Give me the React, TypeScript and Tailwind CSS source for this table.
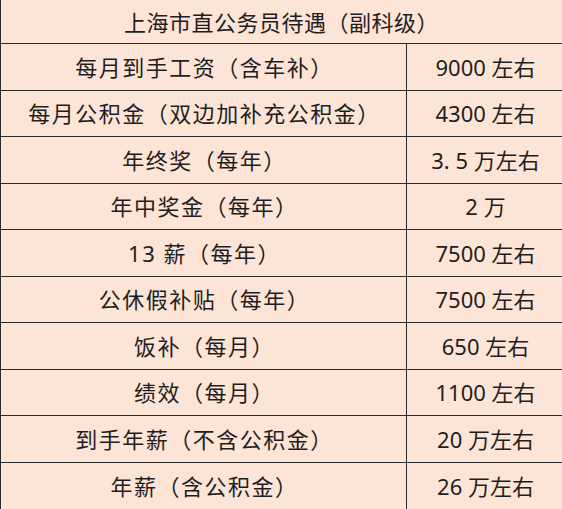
const rows: [string, string][] = [
  ['每月到手工资（含车补）', '9000 左右'],
  ['每月公积金（双边加补充公积金）', '4300 左右'],
  ['年终奖（每年）', '3. 5 万左右'],
  ['年中奖金（每年）', '2 万'],
  ['13 薪（每年）', '7500 左右'],
  ['公休假补贴（每年）', '7500 左右'],
  ['饭补（每月）', '650 左右'],
  ['绩效（每月）', '1100 左右'],
  ['到手年薪（不含公积金）', '20 万左右'],
  ['年薪（含公积金）', '26 万左右'],
];

export default function App() {
  return (
    <div
      className="w-[562px] h-[509px] overflow-hidden bg-[#fce4d6] text-[#1e1e1e] border-l-[1.5px] border-[#2a2a2a] text-[22px] leading-none"
      style={{ fontFamily: '"Noto Sans", "Noto Sans CJK SC", sans-serif' }}
    >
      {/* Title row */}
      <div className="h-[44px] flex items-center justify-center border-b-[1.5px] border-[#2a2a2a] tracking-[0.5px]">
        上海市直公务员待遇（副科级）
      </div>

      {rows.map(([label, value], i) => (
        <div
          key={i}
          className={`grid grid-cols-[406px_1fr] h-[46.5px] ${
            i < rows.length - 1 ? 'border-b-[1.5px] border-[#2a2a2a]' : ''
          }`}
        >
          <div className="flex items-center justify-center border-r-[1.5px] border-[#2a2a2a] tracking-[1.5px] pl-[2px]">
            {label}
          </div>
          <div className="flex items-center justify-center pl-[2px]">{value}</div>
        </div>
      ))}
    </div>
  );
}
